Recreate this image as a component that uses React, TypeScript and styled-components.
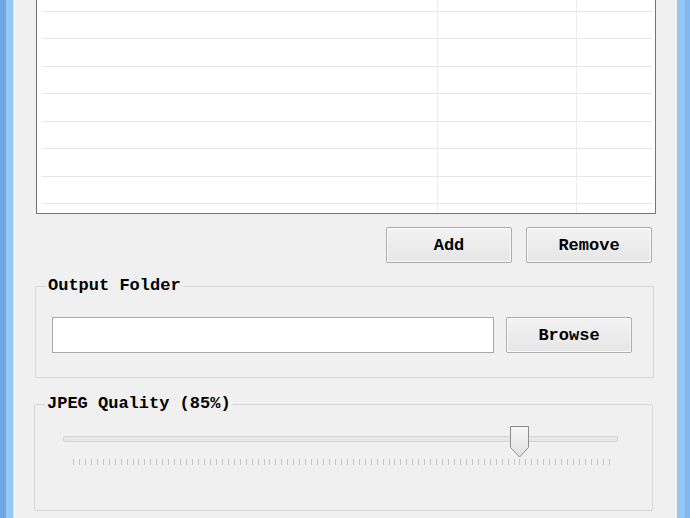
import React from "react";
import styled, { createGlobalStyle } from "styled-components";

const GlobalStyle = createGlobalStyle`
  html, body { margin: 0; padding: 0; background: #f0f0f0; overflow: hidden; }
  body { font-family: "Liberation Mono", "Courier New", monospace; }
  * { box-sizing: border-box; }
`;

const Window = styled.div`
  display: flex;
  width: 690px;
  height: 518px;
  overflow: hidden;
  background: #f0f0f0;
`;

const FrameLeft = styled.div`
  flex: none;
  width: 14px;
  background: linear-gradient(to right, #6ea8e2 0 6px, #97c8f5 6px 13px, #cfe3f6 13px);
`;

const FrameRight = styled.div`
  flex: none;
  width: 13px;
  background: linear-gradient(to right, #93c6f4 0 8px, #80b7ec 8px);
`;

const Client = styled.div`
  flex: 1;
  display: flex;
  flex-direction: column;
  padding: 0 21px 0 21px;
  border-left: 1px solid #f8f8f8;
  font-family: "Liberation Mono", "Courier New", monospace;
  font-weight: bold;
  font-size: 17px;
  color: #000;
`;

const ListBox = styled.div`
  margin-top: -17px;
  height: 231px;
  flex: none;
  border: 1px solid #747474;
  background: #fff;
  display: flex;
  flex-direction: column;
  padding: 0 3px 0 5px;
`;

const Row = styled.div<{ $h: number; $last?: boolean }>`
  flex: ${(p) => (p.$last ? "1" : "none")};
  height: ${(p) => (p.$last ? "auto" : `${p.$h}px`)};
  display: grid;
  grid-template-columns: 396px 139px 1fr;
  border-bottom: ${(p) => (p.$last ? "none" : "1px solid #e7e7e7")};
`;

const Cell = styled.div<{ $end?: boolean }>`
  border-right: ${(p) => (p.$end ? "none" : "1px solid #ededed")};
`;

const ButtonRow = styled.div`
  display: flex;
  justify-content: flex-end;
  gap: 14px;
  margin-top: 13px;
  padding-right: 4px;
`;

const Button = styled.button`
  width: 126px;
  height: 36px;
  flex: none;
  border: 1px solid #acacac;
  border-radius: 2px;
  background: linear-gradient(#f2f2f2, #e6e6e6);
  box-shadow: inset 0 0 0 1px #fbfbfb;
  font: inherit;
  color: #000;
  padding: 0;
`;

const Group = styled.div<{ $top: number; $h: number; $l: number; $r: number }>`
  position: relative;
  margin: ${(p) => `${p.$top}px ${p.$r}px 0 ${p.$l}px`};
  height: ${(p) => p.$h}px;
  border: 1px solid #d7d7d7;
  border-radius: 2px;
`;

const Legend = styled.span<{ $left: number }>`
  position: absolute;
  top: -10px;
  left: ${(p) => p.$left}px;
  padding: 0 2px;
  background: #f0f0f0;
  line-height: 17px;
`;

const FolderRow = styled.div`
  display: flex;
  gap: 12px;
  padding: 30px 21px 0 16px;
`;

const TextInput = styled.div`
  flex: 1;
  height: 36px;
  background: #fff;
  border: 1px solid #a9a9a9;
`;

const SliderWrap = styled.div`
  padding: 21px 0 0 28px;
`;

const Slider = styled.div`
  position: relative;
  display: flex;
  flex-direction: column;
  width: 555px;
  height: 40px;
  padding-top: 10px;
`;

const Track = styled.div`
  height: 6px;
  border: 1px solid #d4d4d4;
  border-radius: 2px;
  background: #e6e8e8;
`;

const Thumb = styled.svg`
  position: absolute;
  top: 0;
  width: 19px;
  height: 32px;
`;

const Ticks = styled.div`
  margin: 17px 8px 0 10px;
  height: 6px;
  display: flex;
  justify-content: space-between;
`;

const Tick = styled.div`
  width: 1px;
  height: 6px;
  background: #c4c4c4;
`;

const rowHeights = [28, 27, 28, 27, 28, 27, 28, 27];
const MIN = 10;
const MAX = 100;
const VALUE = 85;
const TICK_SPAN = 536;

export default function App() {
  const thumbCenter = 10 + ((VALUE - MIN) / (MAX - MIN)) * TICK_SPAN;
  const ticks = Array.from({ length: MAX - MIN + 1 });
  return (
    <>
      <GlobalStyle />
      <Window>
        <FrameLeft />
        <Client>
          <ListBox>
            {rowHeights.map((h, i) => (
              <Row key={i} $h={h}>
                <Cell />
                <Cell />
                <Cell $end />
              </Row>
            ))}
            <Row $h={0} $last>
              <Cell />
              <Cell />
              <Cell $end />
            </Row>
          </ListBox>
          <ButtonRow>
            <Button>Add</Button>
            <Button>Remove</Button>
          </ButtonRow>
          <Group $top={23} $h={92} $l={-1} $r={2}>
            <Legend $left={10}>Output Folder</Legend>
            <FolderRow>
              <TextInput />
              <Button>Browse</Button>
            </FolderRow>
          </Group>
          <Group $top={26} $h={107} $l={-2} $r={3}>
            <Legend $left={10}>JPEG Quality (85%)</Legend>
            <SliderWrap>
              <Slider>
                <Track />
                <Thumb
                  viewBox="0 0 19 32"
                  style={{ left: `${thumbCenter - 9.5}px` }}
                >
                  <defs>
                    <linearGradient id="thumbFill" x1="0" y1="0" x2="0" y2="1">
                      <stop offset="0" stopColor="#f6f6f6" />
                      <stop offset="1" stopColor="#e1e1e1" />
                    </linearGradient>
                  </defs>
                  <path
                    d="M0.5 0.5 H18.5 V21.5 L9.5 31 L0.5 21.5 Z"
                    fill="url(#thumbFill)"
                    stroke="#8c8c8c"
                    strokeWidth="1"
                  />
                </Thumb>
                <Ticks>
                  {ticks.map((_, i) => (
                    <Tick key={i} />
                  ))}
                </Ticks>
              </Slider>
            </SliderWrap>
          </Group>
        </Client>
        <FrameRight />
      </Window>
    </>
  );
}
